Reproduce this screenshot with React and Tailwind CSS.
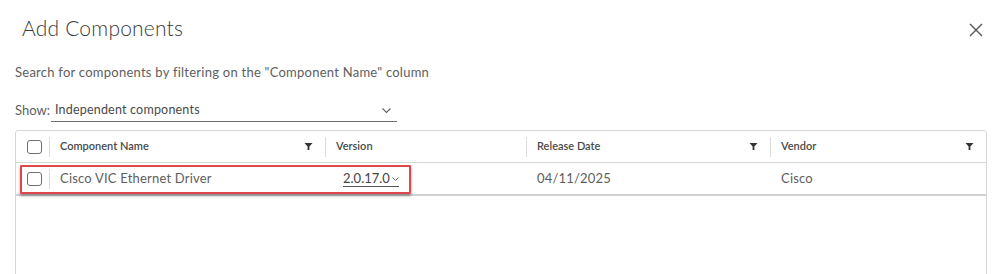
import React from "react";

const FilterIcon = () => (
  <svg width="9" height="9" viewBox="0 0 10 10" className="shrink-0">
    <path d="M0.5 1 H9.5 L6 5 V9 L4 9 V5 Z" fill="#333" />
  </svg>
);

const Checkbox = () => (
  <div className="w-[15px] h-[14px] rounded-[3px] border border-[#6f6f6f] bg-white" />
);

const HeaderCell = ({ label, filter, className }) => (
  <div className={`flex items-center h-full ${className}`}>
    <div className="flex items-center justify-between w-full h-[20px] border-l border-[#dcdcdc] pl-[10px] pr-[12px]">
      <span className="text-[11px] font-semibold text-[#4a4a4a]">{label}</span>
      {filter && <FilterIcon />}
    </div>
  </div>
);

const App = () => {
  const font = { fontFamily: "Lato, 'Open Sans', Arial, sans-serif" };
  return (
    <div
      className="relative w-[999px] h-[274px] overflow-hidden bg-white text-[#5e5e5e]"
      style={font}
    >
      <div className="flex items-center justify-between pl-[22px] pr-[16px] pt-[16px]">
        <h1 className="text-[21px] leading-[24px] text-[#3a3a3a] font-light tracking-[0.2px]">Add Components</h1>
        <svg width="14" height="14" viewBox="0 0 14 14" className="mt-[4px]">
          <path d="M1 1 L13 13 M13 1 L1 13" stroke="#555" strokeWidth="1.4" />
        </svg>
      </div>

      <p className="pl-[15px] mt-[24px] text-[13px] leading-[16px] tracking-[0.25px]">
        Search for components by filtering on the "Component Name" column
      </p>

      <div className="flex items-center pl-[15px] mt-[19px] h-[24px]">
        <span className="text-[13px]">Show:</span>
        <div className="relative ml-[1px] w-[346px] h-[22px] border-b border-[#6e6e6e] flex items-center pl-[4px]">
          <span className="text-[12.5px] text-[#4a4a4a] tracking-[0.2px]">Independent components</span>
          <svg width="9" height="6" viewBox="0 0 9 6" className="absolute right-[6px] top-[8px]">
            <path d="M0.5 0.5 L4.5 4.5 L8.5 0.5" fill="none" stroke="#666" strokeWidth="1.1" />
          </svg>
        </div>
      </div>

      <div className="ml-[15px] mt-[7px] w-[972px] h-[200px] border border-[#d7d7d7] rounded-t-[3px]">
        <div className="flex h-[32px] border-b border-[#d7d7d7]">
          <div className="w-[33px] flex items-center justify-center pl-[3px]">
            <Checkbox />
          </div>
          <HeaderCell label="Component Name" filter className="w-[276px]" />
          <HeaderCell label="Version" className="w-[201px]" />
          <HeaderCell label="Release Date" filter className="w-[244px]" />
          <HeaderCell label="Vendor" filter className="flex-1" />
        </div>

        <div className="flex h-[33px] border-b-2 border-[#d0d0d0] text-[13px] tracking-[0.2px]">
          <div className="w-[33px] flex items-center justify-center pl-[3px]">
            <Checkbox />
          </div>
          <div className="w-[276px] flex items-center">
            <div className="h-[20px] border-l border-[#dcdcdc] pl-[10px] flex items-center">
              Cisco VIC Ethernet Driver
            </div>
          </div>
          <div className="w-[201px] flex items-center">
            <div className="flex items-center ml-[18px] border-b border-[#555] leading-[15px] tracking-normal">
              <span className="text-[#444]">2.0.17.0</span>
              <svg width="7" height="5" viewBox="0 0 7 5" className="ml-[2px] mt-[2px]">
                <path d="M0.5 0.5 L3.5 3.5 L6.5 0.5" fill="none" stroke="#666" strokeWidth="1" />
              </svg>
            </div>
          </div>
          <div className="w-[244px] flex items-center pl-[11px]">04/11/2025</div>
          <div className="flex-1 flex items-center pl-[11px]">Cisco</div>
        </div>
      </div>

      <div className="absolute left-[20px] top-[165px] w-[391px] h-[29px] border-2 border-[#e0474c] rounded-[1px] shadow-[0_2px_3px_rgba(0,0,0,0.35)]" />
    </div>
  );
};

export default App;
